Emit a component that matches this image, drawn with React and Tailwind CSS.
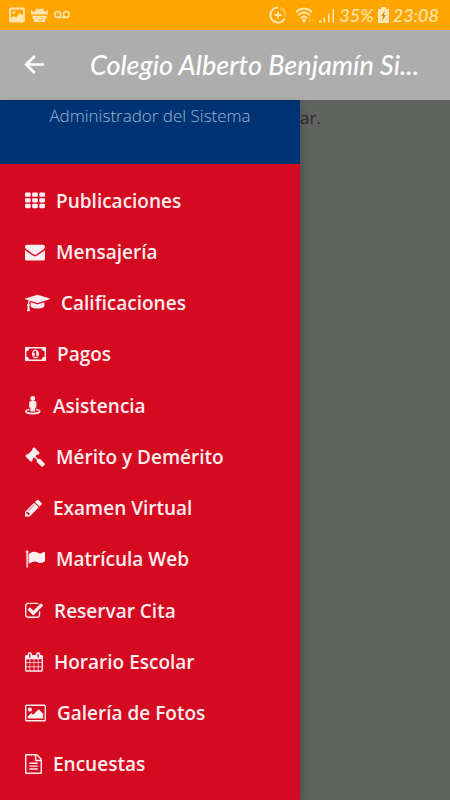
import React from "react";

// Each icon keeps its own width, the label follows it directly
const menuItems = [
  {
    label: "Publicaciones",
    size: "w-5",
    box: "0 0 1792 1792",
    path: "M512 1248v192q0 40-28 68t-68 28h-320q-40 0-68-28t-28-68v-192q0-40 28-68t68-28h320q40 0 68 28t28 68zm0-512v192q0 40-28 68t-68 28h-320q-40 0-68-28t-28-68v-192q0-40 28-68t68-28h320q40 0 68 28t28 68zm640 512v192q0 40-28 68t-68 28h-320q-40 0-68-28t-28-68v-192q0-40 28-68t68-28h320q40 0 68 28t28 68zm-640-1024v192q0 40-28 68t-68 28h-320q-40 0-68-28t-28-68v-192q0-40 28-68t68-28h320q40 0 68 28t28 68zm640 512v192q0 40-28 68t-68 28h-320q-40 0-68-28t-28-68v-192q0-40 28-68t68-28h320q40 0 68 28t28 68zm640 512v192q0 40-28 68t-68 28h-320q-40 0-68-28t-28-68v-192q0-40 28-68t68-28h320q40 0 68 28t28 68zm-640-1024v192q0 40-28 68t-68 28h-320q-40 0-68-28t-28-68v-192q0-40 28-68t68-28h320q40 0 68 28t28 68zm640 512v192q0 40-28 68t-68 28h-320q-40 0-68-28t-28-68v-192q0-40 28-68t68-28h320q40 0 68 28t28 68zm0-512v192q0 40-28 68t-68 28h-320q-40 0-68-28t-28-68v-192q0-40 28-68t68-28h320q40 0 68 28t28 68z",
  },
  {
    label: "Mensajería",
    size: "w-5",
    box: "0 0 1792 1792",
    path: "M1792 710v794q0 66-47 113t-113 47h-1472q-66 0-113-47t-47-113v-794q44 49 101 87 362 246 497 345 57 42 92.5 65.5t94.5 48 110 24.5h2q51 0 110-24.5t94.5-48 92.5-65.5q170-123 498-345 57-39 100-87zm0-294q0 79-49 151t-122 123q-376 261-468 325-10 7-42.5 31t-54 38.5-52 32.5-57.5 27-50 9h-2q-23 0-50-9t-57.5-27-52-32.5-54-38.5-42.5-31q-91-64-262-182.5t-205-142.5q-62-42-117-115.5t-55-136.5q0-78 41.5-130t118.5-52h1472q65 0 112.5 47t47.5 113z",
  },
  {
    label: "Calificaciones",
    size: "w-[25px]",
    box: "0 0 2304 1792",
    path: "M1774 836l18 316q4 69-82 128t-235 93.5-323 34.5-323-34.5-235-93.5-82-128l18-316 574 181q22 7 48 7t48-7zm530-324q0 23-22 31l-1120 352q-4 1-10 1t-10-1l-652-206q-43 34-71 111.5t-34 178.5q63 36 63 109 0 69-58 107l58 433q2 14-8 25-9 11-24 11h-192q-15 0-24-11-10-11-8-25l58-433q-58-38-58-107 0-73 65-111 11-207 98-330l-333-104q-22-8-22-31t22-31l1120-352q4-1 10-1t10 1l1120 352q22 8 22 31z",
  },
  {
    label: "Pagos",
    size: "w-[21px]",
    box: "0 0 1920 1792",
    path: "M768 1152h384v-96h-128v-448h-114l-148 137 77 80q42-37 55-57h2v288h-128v96zm512-256q0 70-21 142t-59.5 134-101.5 101-138 39-138-39-101.5-101-59.5-134-21-142 21-142 59.5-134 101.5-101 138-39 138 39 101.5 101 59.5 134 21 142zm512 256v-512q-106 0-181-75t-75-181h-1152q0 106-75 181t-181 75v512q106 0 181 75t75 181h1152q0-106 75-181t181-75zm128-832v1152q0 26-19 45t-45 19h-1792q-26 0-45-19t-19-45v-1152q0-26 19-45t45-19h1792q26 0 45 19t19 45z",
  },
  {
    label: "Asistencia",
    size: "w-[17px]",
    box: "0 0 1536 1792",
    path: "M704 0a224 224 0 1 1 0 448a224 224 0 1 1 0-448zM544 448h320q72 0 120 48t48 120v350q0 70-104 90v260q0 84-84 84h-280q-84 0-84-84v-260q-104-20-104-90v-350q0-72 48-120t120-48zM400 1150v120q-130 22-206 58t-30 58q80 56 236 84t304 28 304-28 236-84q46-22-30-58t-206-58v-120q180 26 290 94t110 148q0 124-206 199t-498 75-498-75-206-199q0-80 110-148t290-94z",
  },
  {
    label: "Mérito y Demérito",
    size: "w-5",
    box: "0 0 1792 1792",
    path: "M1771 1536q0 53-37 90l-107 108q-39 37-91 37-53 0-90-37l-363-364q-38-36-38-90 0-53 43-96l-256-256-126 126q-14 14-34 14t-34-14q2 2 12.5 12t12.5 13 10 11.5 10 13.5 6 13.5 5.5 16.5 1.5 18q0 38-28 68-3 3-16.5 18t-19 20.5-18.5 16.5-22 15.5-22 9-26 4.5q-40 0-68-28l-408-408q-28-28-28-68 0-13 4.5-26t9-22 15.5-22 16.5-18.5 20.5-19 18-16.5q30-28 68-28 10 0 18 1.5t16.5 5.5 13.5 6 13.5 10 11.5 10 13 12.5 12 12.5q-14-14-14-34t14-34l348-348q14-14 34-14t34 14q-2-2-12.5-12t-12.5-13-10-11.5-10-13.5-6-13.5-5.5-16.5-1.5-18q0-38 28-68 3-3 16.5-18t19-20.5 18.5-16.5 22-15.5 22-9 26-4.5q40 0 68 28l408 408q28 28 28 68 0 13-4.5 26t-9 22-15.5 22-16.5 18.5-20.5 19-18 16.5q-30 28-68 28-10 0-18-1.5t-16.5-5.5-13.5-6-13.5-10-11.5-10-13-12.5-12-12.5q14 14 14 34t-14 34l-126 126 256 256q43-43 96-43 52 0 91 37l363 363q37 39 37 91z",
  },
  {
    label: "Examen Virtual",
    size: "w-[17px]",
    box: "128 0 1536 1792",
    path: "M491 1536l91-91-235-235-91 91v107h128v128h107zm523-928q0-22-22-22-10 0-17 7l-542 542q-7 7-7 17 0 22 22 22 10 0 17-7l542-542q7-7 7-17zm-54-192l416 416-832 832h-416v-416zm683 96q0 53-37 90l-166 166-416-416 166-165q36-38 90-38 53 0 91 38l235 234q37 39 37 91z",
  },
  {
    label: "Matrícula Web",
    size: "w-5",
    box: "0 0 1792 1792",
    path: "M320 256q0 72-64 110v1266q0 13-9.5 22.5t-22.5 9.5h-64q-13 0-22.5-9.5t-9.5-22.5v-1266q-64-38-64-110 0-53 37.5-90.5t90.5-37.5 90.5 37.5 37.5 90.5zm1472 64v763q0 25-12.5 38.5t-39.5 27.5q-215 116-369 116-61 0-123.5-22t-108.5-48-115.5-48-142.5-22q-192 0-464 146-17 9-33 9-26 0-45-19t-19-45v-742q0-32 31-55 21-14 79-43 236-120 421-120 107 0 200 29t219 88q38 19 88 19 54 0 117.5-21t110-47 88-47 54.5-21q26 0 45 19t19 45z",
  },
  {
    label: "Reservar Cita",
    size: "w-[18px]",
    box: "64 0 1664 1792",
    path: "M1472 930v318q0 119-84.5 203.5t-203.5 84.5h-832q-119 0-203.5-84.5t-84.5-203.5v-832q0-119 84.5-203.5t203.5-84.5h832q63 0 117 25 15 7 18 23 3 17-9 29l-49 49q-10 10-23 10-3 0-9-2-23-6-45-6h-832q-66 0-113 47t-47 113v832q0 66 47 113t113 47h832q66 0 113-47t47-113v-254q0-13 9-22l64-64q10-10 23-10 6 0 12 3 20 8 20 29zm231-489l-814 814q-24 24-57 24t-57-24l-430-430q-24-24-24-57t24-57l110-110q24-24 57-24t57 24l263 263 647-647q24-24 57-24t57 24l110 110q24 24 24 57t-24 57z",
  },
  {
    label: "Horario Escolar",
    size: "w-[18px]",
    box: "64 0 1664 1792",
    path: "M192 1664h288v-288h-288v288zm352 0h320v-288h-320v288zm-352-352h288v-320h-288v320zm352 0h320v-320h-320v320zm-352-384h288v-288h-288v288zm736 736h320v-288h-320v288zm-384-736h320v-288h-320v288zm768 736h288v-288h-288v288zm-384-352h320v-320h-320v320zm-352-864v-288q0-13-9.5-22.5t-22.5-9.5h-64q-13 0-22.5 9.5t-9.5 22.5v288q0 13 9.5 22.5t22.5 9.5h64q13 0 22.5-9.5t9.5-22.5zm736 864h288v-320h-288v320zm-384-384h320v-288h-320v288zm384 0h288v-288h-288v288zm32-480v-288q0-13-9.5-22.5t-22.5-9.5h-64q-13 0-22.5 9.5t-9.5 22.5v288q0 13 9.5 22.5t22.5 9.5h64q13 0 22.5-9.5t9.5-22.5zm384-64v1280q0 52-38 90t-90 38h-1408q-52 0-90-38t-38-90v-1280q0-52 38-90t90-38h128v-96q0-66 47-113t113-47h64q66 0 113 47t47 113v96h384v-96q0-66 47-113t113-47h64q66 0 113 47t47 113v96h128q52 0 90 38t38 90z",
  },
  {
    label: "Galería de Fotos",
    size: "w-[21px]",
    box: "-64 0 1920 1792",
    path: "M576 576q0 80-56 136t-136 56-136-56-56-136 56-136 136-56 136 56 56 136zm1024 384v448h-1408v-192l320-320 160 160 512-512zm96-704h-1600q-13 0-22.5 9.5t-9.5 22.5v1216q0 13 9.5 22.5t22.5 9.5h1600q13 0 22.5-9.5t9.5-22.5v-1216q0-13-9.5-22.5t-22.5-9.5zm160 32v1216q0 66-47 113t-113 47h-1600q-66 0-113-47t-47-113v-1216q0-66 47-113t113-47h1600q66 0 113 47t47 113z",
  },
  {
    label: "Encuestas",
    size: "w-[17px]",
    box: "128 0 1536 1792",
    path: "M1596 380q28 28 48 76t20 88v1152q0 40-28 68t-68 28h-1344q-40 0-68-28t-28-68v-1600q0-40 28-68t68-28h896q40 0 88 20t76 48zm-444-244v376h376q-10-29-22-41l-313-313q-12-12-41-22zm384 1528v-1024h-416q-40 0-68-28t-28-68v-416h-768v1536h1280zm-1024-864q0-14 9-23t23-9h704q14 0 23 9t9 23v64q0 14-9 23t-23 9h-704q-14 0-23-9t-9-23v-64zm736 224q14 0 23 9t9 23v64q0 14-9 23t-23 9h-704q-14 0-23-9t-9-23v-64q0-14 9-23t23-9h704zm0 256q14 0 23 9t9 23v64q0 14-9 23t-23 9h-704q-14 0-23-9t-9-23v-64q0-14 9-23t23-9h704z",
  },
];

const StatusBar = () => (
  <div className="flex h-[30px] items-center justify-between bg-[#ffa500] pl-[9px] pr-[11px] text-[#ffe5b0]">
    <div className="flex items-center gap-[6px]">
      {/* Picture */}
      <svg className="h-4 w-4" viewBox="0 0 16 16" fill="none">
        <rect x="1" y="1.5" width="14" height="13" rx="1" stroke="currentColor" strokeWidth="1.8" />
        <circle cx="4.800" cy="5.500" r="1.300" fill="currentColor" />
        <path d="M2 14V11l3-2 2 1.500 4-4.500 1.500 2L14 7.500V14z" fill="currentColor" />
      </svg>
      {/* Game */}
      <svg className="h-4 w-[17px]" viewBox="0 0 17 16" fill="currentColor">
        <path d="M4.500 4l.7-2.500L8.500 2.200 12 1.200l.7 2.800L15 5l1.800-3v5.500H.2V2L2 5z" />
        <path d="M1.500 8.500h14v3L14 12v3H3v-3l-1.500-.5z" />
        <path d="M2 8h13M5 10.800h1.500M10 10.800h1.500M7 13l2.500.8L12 12.500" fill="none" stroke="#ffa500" strokeWidth="0.900" />
      </svg>
      {/* Voicemail */}
      <svg className="h-4 w-4" viewBox="0 0 16 16" fill="none" stroke="currentColor" strokeWidth="1.500">
        <circle cx="3.700" cy="7.500" r="2.900" />
        <circle cx="12.300" cy="7.500" r="2.900" />
        <path d="M3.700 10.400h8.600" />
      </svg>
    </div>
    <div className="flex items-center gap-1">
      {/* Data saver */}
      <svg className="h-[18px] w-[18px]" viewBox="0 0 18 18" fill="none" stroke="currentColor">
        <path d="M9 1.500a7.500 7.500 0 1 0 6.500 11.200" strokeWidth="2.200" />
        <path d="M11 1.800a7.500 7.500 0 0 1 5 9" strokeWidth="2.200" opacity="0.4" />
        <path d="M9 5.500v7M5.500 9h7" strokeWidth="1.800" />
      </svg>
      {/* Wifi */}
      <svg className="ml-1 h-[18px] w-[20px]" viewBox="0 0 20 18" fill="none" stroke="currentColor" strokeWidth="1.900">
        <path d="M1 6q8-7 16 0M3.500 9q5.500-5 11 0M6 12q3-3 6 0" />
        <circle cx="9" cy="14.500" r="1" fill="currentColor" />
        <path d="M14.500 12v4M18 12v4" strokeWidth="1" opacity="0.4" />
      </svg>
      {/* Signal */}
      <svg className="h-4 w-4" viewBox="0 0 16 16" fill="currentColor">
        <path d="M0 13.500h2.500V15.500H0zM4.500 10.500h1.500v5H4.500zM9 6.500h1.500v9H9zM13.500 2h1.500v13.500H13.500z" />
      </svg>
      <span className="font-['Lato',sans-serif] text-lg font-medium italic">35%</span>
      {/* Battery */}
      <svg className="h-4 w-[11px]" viewBox="0 0 11 16" fill="currentColor">
        <path d="M3 0h5v2h3v14H0V2h3z" />
        <path d="M7 4L3 9h2l-1 5 4-6H6z" fill="#c98a1c" />
      </svg>
      <span className="font-['Lato',sans-serif] text-lg font-medium italic">23:08</span>
    </div>
  </div>
);

const App = () => {
  return (
    <div className="flex min-h-screen flex-col bg-[#616361] font-['Open_Sans',sans-serif]">
      <StatusBar />

      {/* Header */}
      <header className="flex h-[70px] items-center bg-[#adadad] pl-6 pr-8 text-white">
        <button type="button" aria-label="Volver" className="shrink-0">
          <svg className="h-5 w-5" viewBox="0 0 20 20" fill="none" stroke="currentColor" strokeWidth="2.700">
            <path d="M20 9.500H2M10.800 1L2.200 9.500l8.600 8.500" />
          </svg>
        </button>
        <h1 className="ml-[46px] whitespace-nowrap font-['Lato',sans-serif] text-[27px] font-medium italic">
          Colegio Alberto Benjamín Si...
        </h1>
      </header>

      <div className="flex flex-1">
        {/* Drawer */}
        <aside className="relative z-10 flex w-[300px] shrink-0 flex-col bg-[#d50a21] shadow-[0_8px_12px_rgba(0,0,0,0.3)]">
          <div className="h-16 border-t border-[#0b2a63] bg-[#003373] pt-[2px] text-center text-[17px] font-light leading-[26px] text-[#9db4d6]">
            Administrador del Sistema
          </div>
          <nav className="flex flex-1 flex-col pb-[10px] pt-[11px]">
            {menuItems.map((item) => (
              <a
                key={item.label}
                href="#"
                className="flex flex-1 items-center gap-[11px] pl-[25px] text-[19px] font-semibold leading-[26px] text-[#ffeef0]"
              >
                <svg className={`h-5 shrink-0 ${item.size}`} viewBox={item.box} fill="currentColor">
                  <path d={item.path} />
                </svg>
                {item.label}
              </a>
            ))}
          </nav>
        </aside>

        {/* Dimmed page */}
        <main className="flex-1 pt-[5px] text-[17px] leading-[26px] text-[#2b2d2b]">
          ar.
        </main>
      </div>
    </div>
  );
};

export default App;
